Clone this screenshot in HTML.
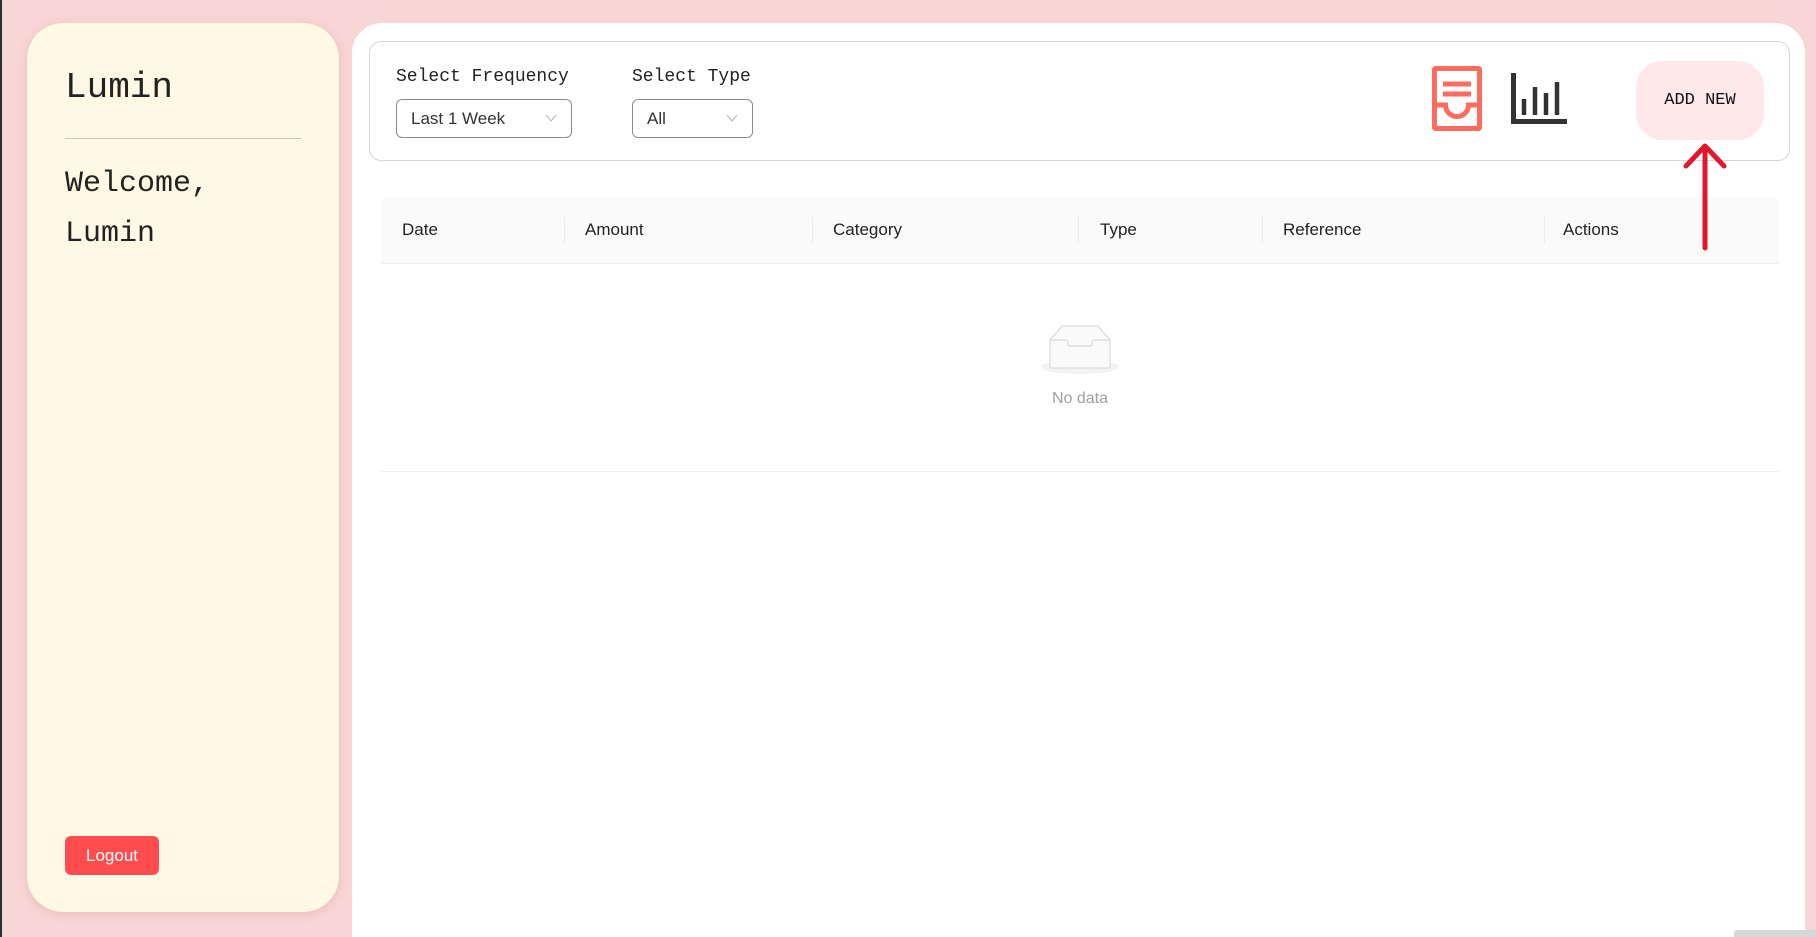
<!DOCTYPE html>
<html><head><meta charset="utf-8"><style>
*{box-sizing:border-box;margin:0;padding:0}
body{width:1816px;height:937px;overflow:hidden;background:#f8d6d5;position:relative;font-family:"Liberation Sans",sans-serif;color:#222}
.edge{position:absolute;left:0;top:0;width:2px;height:937px;background:#2a2d34}
.side{position:absolute;left:27px;top:23px;width:312px;height:889px;background:#fff8e5;border-radius:36px;box-shadow:0 2px 10px rgba(200,140,140,.35)}
.mono{font-family:"Liberation Mono","DejaVu Sans Mono",monospace}
.title{position:absolute;left:38px;top:44px;font-size:36px;color:#222}
.hr{position:absolute;left:38px;top:115px;width:236px;height:1px;background:#cfc6b8}
.wel{position:absolute;left:38px;top:136px;font-size:30px;line-height:50px;color:#222}
.logout{position:absolute;left:38px;top:813px;width:94px;height:39px;background:#ff4d4f;border-radius:6px;color:#fff;font-size:17px;text-align:center;line-height:39px}
.main{position:absolute;left:352px;top:23px;width:1453px;height:914px;background:#fff;border-radius:30px 30px 0 0}
.filter{position:absolute;left:369px;top:41px;width:1421px;height:120px;border:1px solid #d6d6d6;border-radius:12px;background:#fff}
.lbl{position:absolute;font-size:18px;color:#222;top:25px}
.sel{position:absolute;top:57px;height:39px;border:1px solid #8c8c8c;border-radius:6px;font-size:17px;line-height:37px;padding-left:14px;color:#333}
.sel svg{position:absolute;right:14px;top:14px}
.add{position:absolute;left:1636px;top:61px;width:128px;height:79px;background:#ffe8ea;border-radius:26px;font-size:17px;text-align:center;line-height:79px;color:#111}
.thead{position:absolute;left:381px;top:197px;width:1398px;height:67px;background:#fafafa;border-radius:8px 8px 0 0;border-bottom:1px solid #efefef}
.th{position:absolute;top:23px;font-size:17px;font-weight:500;color:#222}
.dv{position:absolute;top:20px;width:1px;height:27px;background:#ececec}
.bot{position:absolute;left:381px;top:471px;width:1398px;height:1px;background:#efefef}
.nod{position:absolute;left:1030px;top:390px;width:100px;text-align:center;font-size:16px;color:#a0a0a0}
</style></head><body>
<div class="edge"></div>
<div class="side">
<div class="title mono">Lumin</div>
<div class="hr"></div>
<div class="wel mono">Welcome,<br>Lumin</div>
<div class="logout">Logout</div>
</div>
<div class="main"></div>
<div class="filter">
<div class="lbl mono" style="left:26px">Select Frequency</div>
<div class="sel" style="left:26px;width:176px">Last 1 Week<svg width="12" height="8" viewBox="0 0 12 8"><path d="M1 1l5 6 5-6" fill="none" stroke="#bbb" stroke-width="1.2"/></svg></div>
<div class="lbl mono" style="left:262px">Select Type</div>
<div class="sel" style="left:262px;width:121px">All<svg width="12" height="8" viewBox="0 0 12 8"><path d="M1 1l5 6 5-6" fill="none" stroke="#bbb" stroke-width="1.2"/></svg></div>
</div>
<svg style="position:absolute;left:1432px;top:66px" width="50" height="65" viewBox="0 0 50 65">
<rect x="2.5" y="2.5" width="45" height="60" fill="none" stroke="#ff6b5e" stroke-width="5" rx="1"/>
<path d="M11 18h28M11 28h28" stroke="#ff6b5e" stroke-width="5"/>
<path d="M2.5 39h11a11.5 11.5 0 0 0 23 0h11" fill="none" stroke="#ff6b5e" stroke-width="5"/>
</svg>
<svg style="position:absolute;left:1511px;top:73px" width="56" height="51" viewBox="0 0 56 51">
<path d="M2.5 0v48.5H56" fill="none" stroke="#333" stroke-width="5"/>
<path d="M13 26v16M24 14v28M35 20v22M46 9v33" stroke="#333" stroke-width="4.5"/>
</svg>
<div class="add mono">ADD NEW</div>
<div class="thead">
<div class="th" style="left:21px">Date</div>
<div class="dv" style="left:183px"></div>
<div class="th" style="left:204px">Amount</div>
<div class="dv" style="left:431px"></div>
<div class="th" style="left:452px">Category</div>
<div class="dv" style="left:697px"></div>
<div class="th" style="left:719px">Type</div>
<div class="dv" style="left:881px"></div>
<div class="th" style="left:902px">Reference</div>
<div class="dv" style="left:1163px"></div>
<div class="th" style="left:1182px">Actions</div>
</div>
<svg style="position:absolute;left:1680px;top:140px;z-index:5" width="50" height="112" viewBox="0 0 50 112">
<path d="M25 108V6M6 26L25 6l19 20" fill="none" stroke="#e0182d" stroke-width="5" stroke-linecap="round" stroke-linejoin="round"/>
</svg>
<svg style="position:absolute;left:1040px;top:322px" width="80" height="55" viewBox="0 0 80 55">
<ellipse cx="40" cy="45" rx="39" ry="7" fill="#f3f3f3"/>
<path d="M10 18L22 4h36l12 14v26a2 2 0 0 1-2 2H12a2 2 0 0 1-2-2z" fill="#fafafa" stroke="#d9d9d9" stroke-width="1.2"/>
<path d="M10 18h15a3 3 0 0 1 3 3v1a2 2 0 0 0 2 2h20a2 2 0 0 0 2-2v-1a3 3 0 0 1 3-3h15" fill="none" stroke="#d9d9d9" stroke-width="1.2"/>
</svg>
<div class="nod">No data</div>
<div class="bot"></div>
<div style="position:absolute;left:1734px;top:930px;width:82px;height:7px;background:#d8d8d8;border-radius:3px 0 0 0"></div>
</body></html>
